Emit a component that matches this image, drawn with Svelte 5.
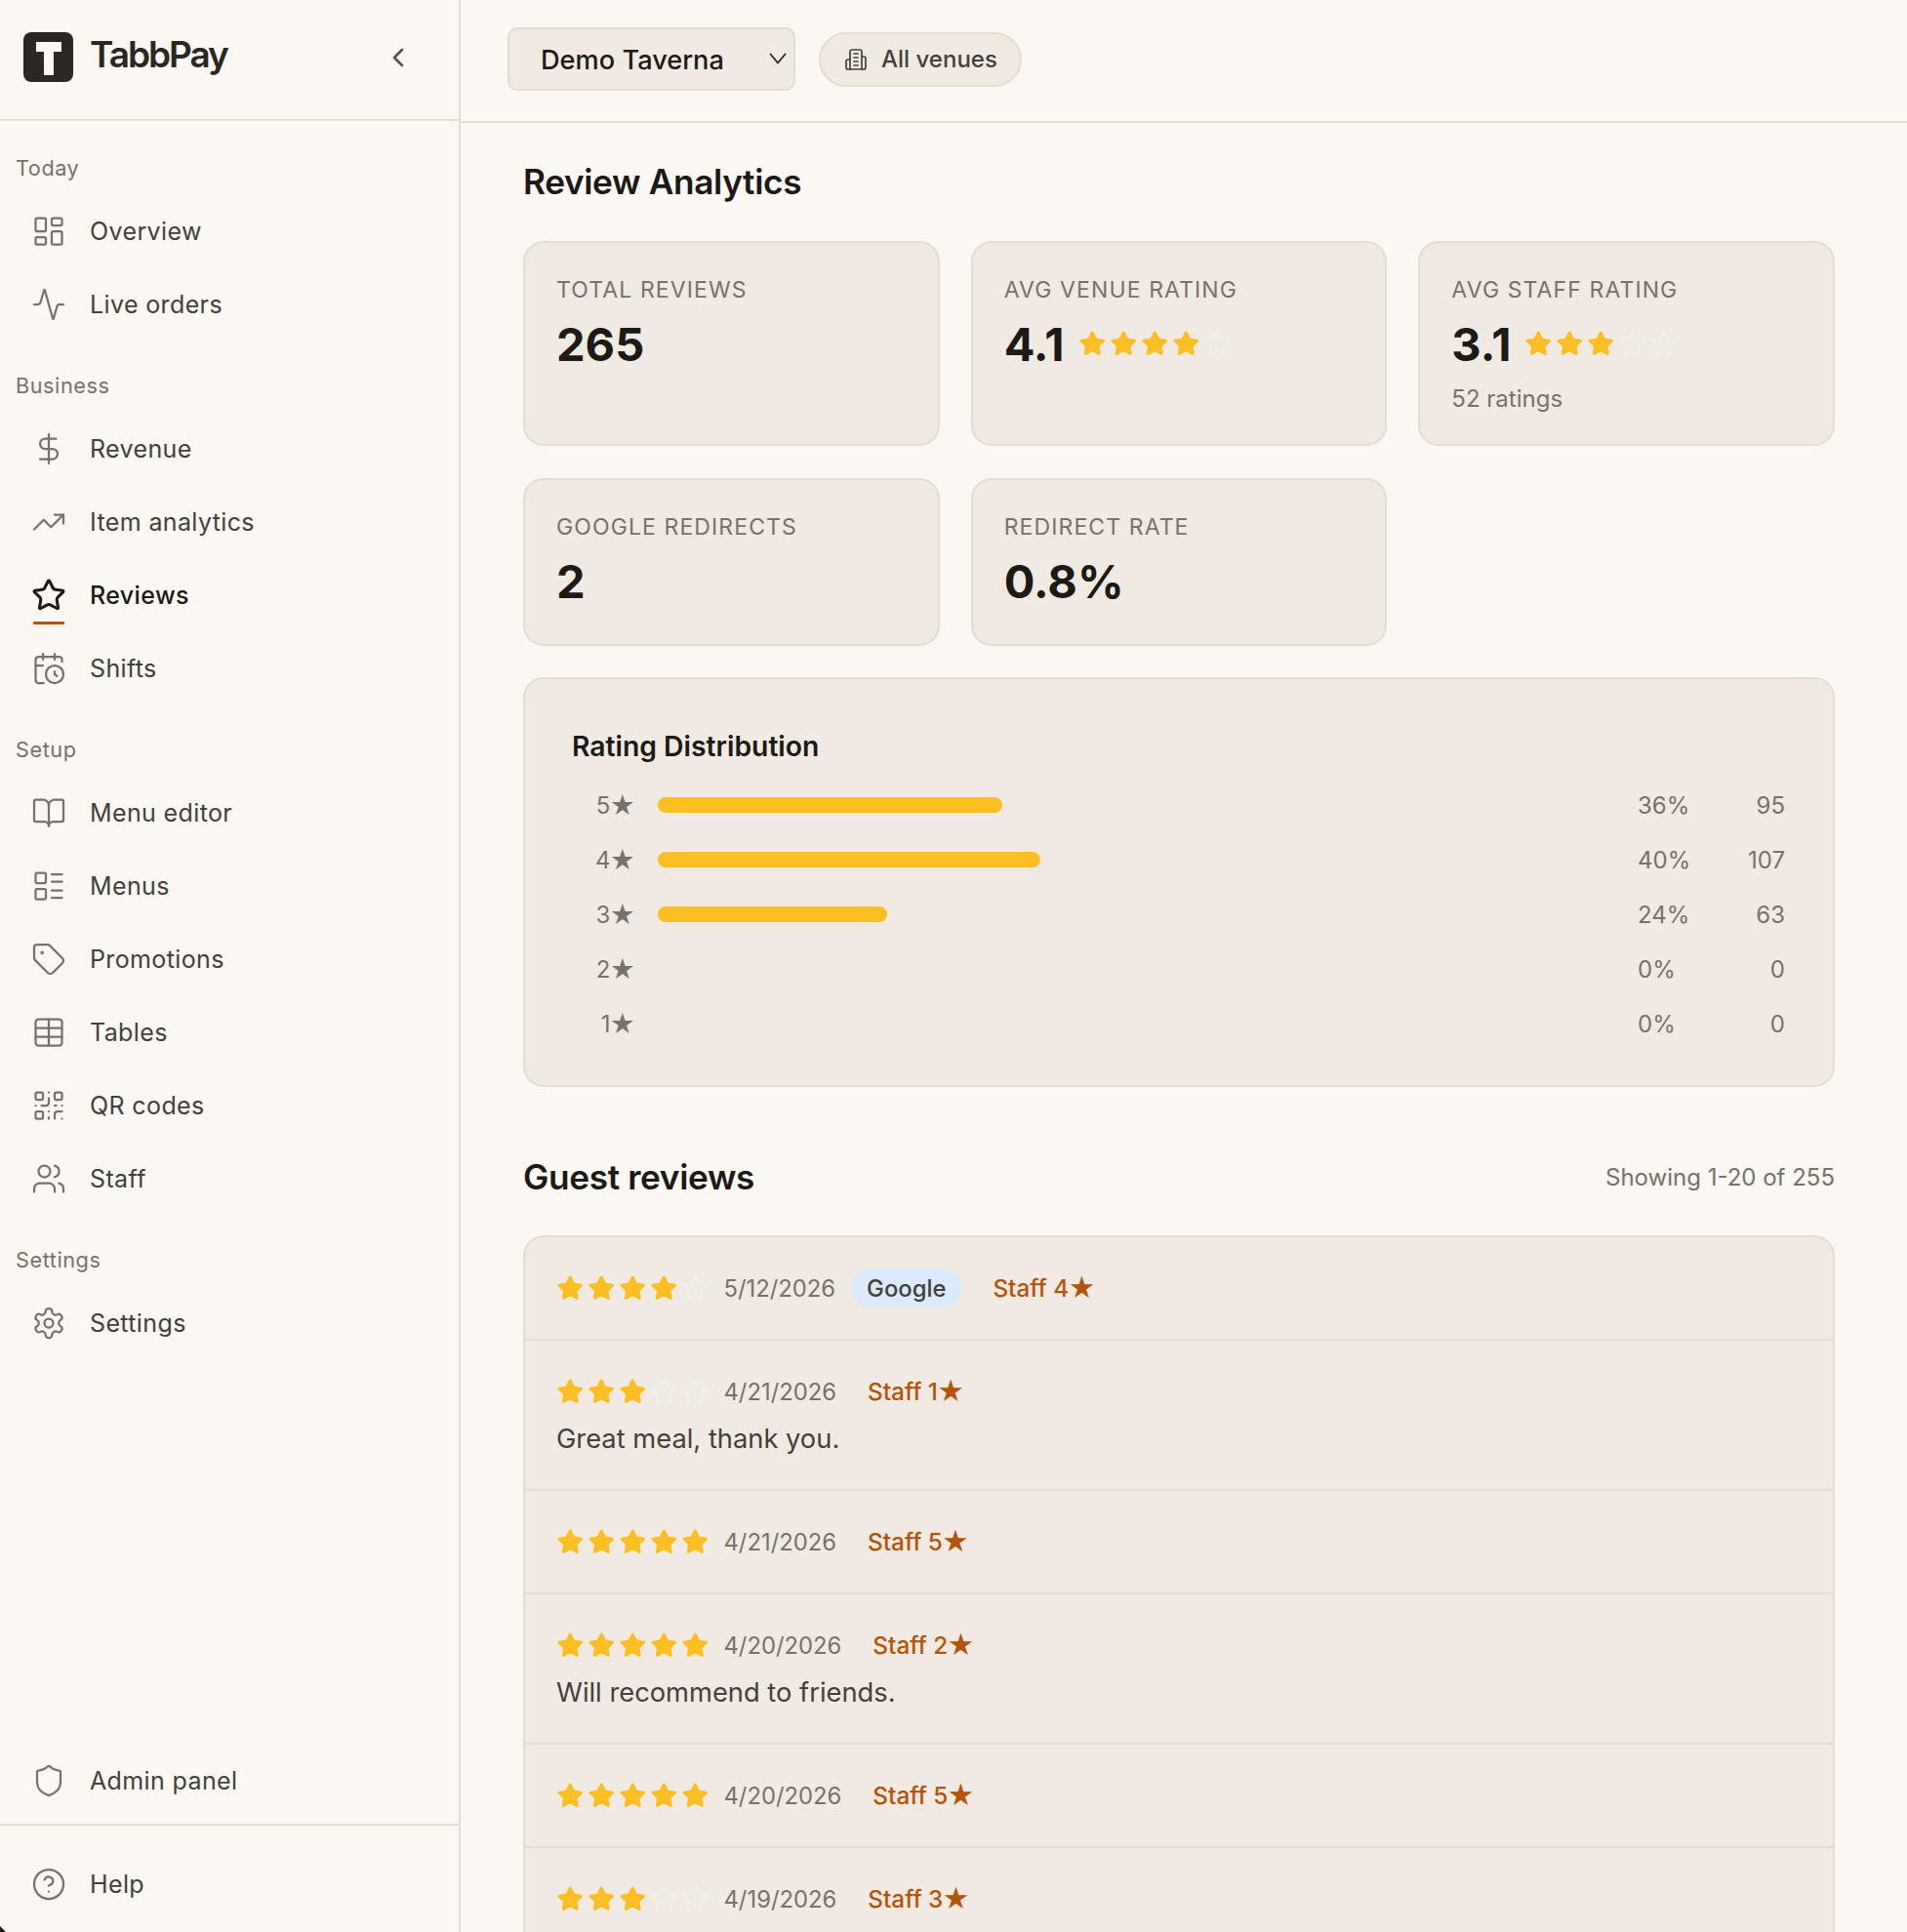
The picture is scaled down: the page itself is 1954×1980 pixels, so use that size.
<script>
	const navGroups = [
		{ label: 'Today', items: [{ name: 'Overview', icon: 'dashboard' }, { name: 'Live orders', icon: 'activity' }] },
		{
			label: 'Business',
			items: [
				{ name: 'Revenue', icon: 'dollar' },
				{ name: 'Item analytics', icon: 'trending' },
				{ name: 'Reviews', icon: 'star', active: true },
				{ name: 'Shifts', icon: 'calendar' }
			]
		},
		{
			label: 'Setup',
			items: [
				{ name: 'Menu editor', icon: 'book' },
				{ name: 'Menus', icon: 'list' },
				{ name: 'Promotions', icon: 'tag' },
				{ name: 'Tables', icon: 'table' },
				{ name: 'QR codes', icon: 'qr' },
				{ name: 'Staff', icon: 'users' }
			]
		},
		{ label: 'Settings', items: [{ name: 'Settings', icon: 'gear' }] }
	];

	const distribution = [
		{ star: 5, pct: 36, count: 95 },
		{ star: 4, pct: 40, count: 107 },
		{ star: 3, pct: 24, count: 63 },
		{ star: 2, pct: 0, count: 0 },
		{ star: 1, pct: 0, count: 0 }
	];

	const reviews = [
		{ rating: 4, date: '5/12/2026', google: true, staff: 4 },
		{ rating: 3, date: '4/21/2026', staff: 1, comment: 'Great meal, thank you.' },
		{ rating: 5, date: '4/21/2026', staff: 5 },
		{ rating: 5, date: '4/20/2026', staff: 2, comment: 'Will recommend to friends.' },
		{ rating: 5, date: '4/20/2026', staff: 5 },
		{ rating: 3, date: '4/19/2026', staff: 3 }
	];

	const starPath =
		'M11.525 2.295a.53.53 0 0 1 .95 0l2.31 4.679a2.123 2.123 0 0 0 1.595 1.16l5.166.756a.53.53 0 0 1 .294.904l-3.736 3.638a2.123 2.123 0 0 0-.611 1.878l.882 5.14a.53.53 0 0 1-.771.56l-4.618-2.428a2.122 2.122 0 0 0-1.973 0L6.396 21.01a.53.53 0 0 1-.77-.56l.881-5.139a2.122 2.122 0 0 0-.611-1.879L2.16 9.795a.53.53 0 0 1 .294-.906l5.165-.755a2.122 2.122 0 0 0 1.597-1.16z';
</script>

{#snippet icon(name)}
	<svg class="icon" viewBox="0 0 24 24" aria-hidden="true">
		{#if name === 'dashboard'}
			<rect x="3" y="3" width="7" height="9" rx="1" /><rect x="14" y="3" width="7" height="5" rx="1" /><rect x="14" y="12" width="7" height="9" rx="1" /><rect x="3" y="16" width="7" height="5" rx="1" />
		{:else if name === 'activity'}
			<path d="M22 12h-2.48a2 2 0 0 0-1.93 1.46l-2.35 8.36a.25.25 0 0 1-.48 0L9.24 2.18a.25.25 0 0 0-.48 0l-2.35 8.36A2 2 0 0 1 4.49 12H2" />
		{:else if name === 'dollar'}
			<path d="M12 2v20" /><path d="M17 5H9.5a3.5 3.5 0 0 0 0 7h5a3.5 3.5 0 0 1 0 7H6" />
		{:else if name === 'trending'}
			<path d="M22 7 13.5 15.5 8.5 10.5 2 17" /><path d="M16 7h6v6" />
		{:else if name === 'star'}
			<path d={starPath} />
		{:else if name === 'calendar'}
			<path d="M16 14v2.2l1.6 1" /><path d="M16 2v4" /><path d="M21 7.5V6a2 2 0 0 0-2-2H5a2 2 0 0 0-2 2v14a2 2 0 0 0 2 2h3.5" /><path d="M3 10h5" /><path d="M8 2v4" /><circle cx="16" cy="16" r="6" />
		{:else if name === 'book'}
			<path d="M12 7v14" /><path d="M3 18a1 1 0 0 1-1-1V4a1 1 0 0 1 1-1h5a4 4 0 0 1 4 4 4 4 0 0 1 4-4h5a1 1 0 0 1 1 1v13a1 1 0 0 1-1 1h-6a3 3 0 0 0-3 3 3 3 0 0 0-3-3z" />
		{:else if name === 'list'}
			<rect x="3" y="3" width="7" height="7" rx="1" /><rect x="3" y="14" width="7" height="7" rx="1" /><path d="M14 4h7" /><path d="M14 9h7" /><path d="M14 15h7" /><path d="M14 20h7" />
		{:else if name === 'tag'}
			<path d="M12.586 2.586A2 2 0 0 0 11.172 2H4a2 2 0 0 0-2 2v7.172a2 2 0 0 0 .586 1.414l8.704 8.704a2.426 2.426 0 0 0 3.42 0l6.58-6.58a2.426 2.426 0 0 0 0-3.42z" /><circle cx="7.5" cy="7.5" r=".5" />
		{:else if name === 'table'}
			<path d="M12 3v18" /><rect x="3" y="3" width="18" height="18" rx="2" /><path d="M3 9h18" /><path d="M3 15h18" />
		{:else if name === 'qr'}
			<rect x="3" y="3" width="5" height="5" rx="1" /><rect x="16" y="3" width="5" height="5" rx="1" /><rect x="3" y="16" width="5" height="5" rx="1" /><path d="M21 16h-3a2 2 0 0 0-2 2v3" /><path d="M21 21v.01" /><path d="M12 7v3a2 2 0 0 1-2 2H7" /><path d="M3 12h.01" /><path d="M12 3h.01" /><path d="M12 16v.01" /><path d="M16 12h1" /><path d="M21 12v.01" /><path d="M12 21v-1" />
		{:else if name === 'users'}
			<path d="M16 21v-2a4 4 0 0 0-4-4H6a4 4 0 0 0-4 4v2" /><path d="M16 3.128a4 4 0 0 1 0 7.744" /><path d="M22 21v-2a4 4 0 0 0-3-3.87" /><circle cx="9" cy="7" r="4" />
		{:else if name === 'gear'}
			<path d="M12.22 2h-.44a2 2 0 0 0-2 2v.18a2 2 0 0 1-1 1.73l-.43.25a2 2 0 0 1-2 0l-.15-.08a2 2 0 0 0-2.73.73l-.22.38a2 2 0 0 0 .73 2.73l.15.1a2 2 0 0 1 1 1.72v.51a2 2 0 0 1-1 1.74l-.15.09a2 2 0 0 0-.73 2.73l.22.38a2 2 0 0 0 2.73.73l.15-.08a2 2 0 0 1 2 0l.43.25a2 2 0 0 1 1 1.73V20a2 2 0 0 0 2 2h.44a2 2 0 0 0 2-2v-.18a2 2 0 0 1 1-1.73l.43-.25a2 2 0 0 1 2 0l.15.08a2 2 0 0 0 2.73-.73l.22-.39a2 2 0 0 0-.73-2.73l-.15-.08a2 2 0 0 1-1-1.74v-.5a2 2 0 0 1 1-1.74l.15-.09a2 2 0 0 0 .73-2.73l-.22-.38a2 2 0 0 0-2.73-.73l-.15.08a2 2 0 0 1-2 0l-.43-.25a2 2 0 0 1-1-1.73V4a2 2 0 0 0-2-2z" /><circle cx="12" cy="12" r="3" />
		{:else if name === 'shield'}
			<path d="M20 13c0 5-3.5 7.5-7.66 8.95a1 1 0 0 1-.67-.01C7.5 20.5 4 18 4 13V6a1 1 0 0 1 1-1c2 0 4.5-1.2 6.24-2.72a1.17 1.17 0 0 1 1.52 0C14.51 3.81 17 5 19 5a1 1 0 0 1 1 1z" />
		{:else if name === 'help'}
			<circle cx="12" cy="12" r="10" /><path d="M9.09 9a3 3 0 0 1 5.83 1c0 2-3 3-3 3" /><path d="M12 17h.01" />
		{/if}
	</svg>
{/snippet}

{#snippet stars(rating)}
	<span class="stars">
		{#each [1, 2, 3, 4, 5] as n}
			<svg class="star" class:filled={n <= rating} viewBox="0 0 24 24" aria-hidden="true"><path d={starPath} /></svg>
		{/each}
	</span>
{/snippet}

{#snippet navItem(item)}
	<a class="nav-item" class:active={item.active} href="#top">
		<span class="nav-icon">{@render icon(item.icon)}</span>
		<span>{item.name}</span>
	</a>
{/snippet}

<div class="app">
	<aside class="sidebar">
		<div class="brand">
			<svg class="logo" viewBox="0 0 51 51" aria-hidden="true">
				<rect width="51" height="51" rx="8" fill="#2a2724" />
				<path d="M13 10h26v10h-8v24H21V20h-8z" fill="#fbf7f3" />
			</svg>
			<span class="brand-name">TabbPay</span>
			<svg class="collapse" viewBox="0 0 24 24" aria-hidden="true"><path d="m15 18-6-6 6-6" /></svg>
		</div>

		<nav class="nav">
			{#each navGroups as group}
				<div class="nav-group">
					<div class="nav-label">{group.label}</div>
					{#each group.items as item}
						{@render navItem(item)}
					{/each}
				</div>
			{/each}
		</nav>

		<div class="side-bottom">
			<div class="admin">{@render navItem({ name: 'Admin panel', icon: 'shield' })}</div>
			<div class="help">{@render navItem({ name: 'Help', icon: 'help' })}</div>
		</div>
	</aside>

	<main class="main">
		<header class="topbar">
			<div class="venue-select">
				<span>Demo Taverna</span>
				<svg viewBox="0 0 18 12" aria-hidden="true"><path d="M1.5 1.5 9 10.5 16.5 1.5" /></svg>
			</div>
			<div class="venues-pill">
				<svg viewBox="0 0 24 24" aria-hidden="true">
					<path d="M6 22V4a2 2 0 0 1 2-2h8a2 2 0 0 1 2 2v18Z" /><path d="M6 12H4a2 2 0 0 0-2 2v6a2 2 0 0 0 2 2h2" /><path d="M18 9h2a2 2 0 0 1 2 2v9a2 2 0 0 1-2 2h-2" /><path d="M10 6h4" /><path d="M10 10h4" /><path d="M10 14h4" /><path d="M10 18h4" />
				</svg>
				<span>All venues</span>
			</div>
		</header>

		<div class="content">
			<h1>Review Analytics</h1>

			<section class="stats">
				<div class="card stat">
					<div class="stat-label">Total reviews</div>
					<div class="stat-value">265</div>
				</div>
				<div class="card stat">
					<div class="stat-label">Avg venue rating</div>
					<div class="stat-value">4.1 {@render stars(4)}</div>
				</div>
				<div class="card stat">
					<div class="stat-label">Avg staff rating</div>
					<div class="stat-value">3.1 {@render stars(3)}</div>
					<div class="stat-sub">52 ratings</div>
				</div>
				<div class="card stat">
					<div class="stat-label">Google redirects</div>
					<div class="stat-value">2</div>
				</div>
				<div class="card stat">
					<div class="stat-label">Redirect rate</div>
					<div class="stat-value">0.8%</div>
				</div>
			</section>

			<section class="card dist">
				<h3>Rating Distribution</h3>
				{#each distribution as row}
					<div class="dist-row">
						<span class="dist-star">{row.star}<span class="glyph">★</span></span>
						<span class="track"><span class="bar" style="width: {row.pct}%"></span></span>
						<span class="dist-pct">{row.pct}%</span>
						<span class="dist-count">{row.count}</span>
					</div>
				{/each}
			</section>

			<div class="reviews-head">
				<h2>Guest reviews</h2>
				<span class="showing">Showing 1-20 of 255</span>
			</div>

			<section class="card reviews">
				{#each reviews as review}
					<article class="review">
						<div class="review-meta">
							{@render stars(review.rating)}
							<span class="date">{review.date}</span>
							{#if review.google}
								<span class="badge">Google</span>
							{/if}
							<span class="staff">Staff {review.staff}<span class="glyph">★</span></span>
						</div>
						{#if review.comment}
							<p class="comment">{review.comment}</p>
						{/if}
					</article>
				{/each}
			</section>
		</div>
	</main>

	<span class="corner"></span>
</div>

<style>
	:global(body) {
		margin: 0;
		background: #fbf7f3;
	}

	.app {
		position: relative;
		display: flex;
		height: 100vh;
		overflow: hidden;
		background: #fbf7f3;
		color: #1c1917;
		font-family: Inter, 'Noto Sans', sans-serif;
	}

	/* Sidebar */
	.sidebar {
		box-sizing: border-box;
		flex: 0 0 472px;
		display: flex;
		flex-direction: column;
		border-right: 2px solid #e3ddd2;
	}

	.brand {
		box-sizing: border-box;
		height: 124px;
		display: flex;
		align-items: center;
		padding: 0 0 5px 24px;
		border-bottom: 2px solid #e3ddd2;
	}

	.logo {
		width: 51px;
		height: 51px;
		flex: none;
	}

	.brand-name {
		margin-left: 17px;
		margin-top: -7px;
		font-size: 37px;
		font-weight: 600;
		letter-spacing: -0.055em;
		color: #2a2724;
	}

	.collapse {
		width: 32px;
		height: 32px;
		margin-left: auto;
		margin-right: 46px;
		fill: none;
		stroke: #57534e;
		stroke-width: 2;
		stroke-linecap: round;
		stroke-linejoin: round;
	}

	.nav {
		padding-top: 33px;
	}

	.nav-group {
		margin-bottom: 31px;
	}

	.nav-label {
		height: 30px;
		line-height: 30px;
		margin-bottom: 12px;
		padding-left: 16px;
		font-size: 21.7px;
		letter-spacing: 0.025em;
		color: #78716c;
	}

	.nav-item {
		position: relative;
		box-sizing: border-box;
		height: 75px;
		display: flex;
		align-items: center;
		padding-left: 32px;
		font-size: 25px;
		letter-spacing: 0.015em;
		text-decoration: none;
		color: #44403c;
	}

	.nav-item.active {
		color: #1c1917;
		font-weight: 500;
	}

	.nav-icon {
		position: relative;
		display: flex;
		width: 36px;
		height: 36px;
		margin-right: 24px;
		color: #78716c;
	}

	.active .nav-icon {
		color: #1c1917;
	}

	.active .nav-icon::after {
		content: '';
		position: absolute;
		left: 2px;
		right: 2px;
		bottom: -12px;
		height: 3px;
		border-radius: 1px;
		background: #b45309;
	}

	.icon {
		width: 36px;
		height: 36px;
		fill: none;
		stroke: currentColor;
		stroke-width: 1.5;
		stroke-linecap: round;
		stroke-linejoin: round;
	}

	.active .icon {
		stroke-width: 2;
	}

	.side-bottom {
		margin-top: auto;
	}

	.admin {
		padding-bottom: 7px;
	}

	.help {
		padding: 22px 0 12px;
		border-top: 2px solid #e3ddd2;
	}

	/* Top bar */
	.main {
		flex: 1;
		min-width: 0;
	}

	.topbar {
		box-sizing: border-box;
		height: 126px;
		display: flex;
		align-items: center;
		gap: 24px;
		padding: 0 0 3px 48px;
		border-bottom: 2px solid #e3ddd2;
	}

	.venue-select {
		box-sizing: border-box;
		width: 295px;
		height: 65px;
		display: flex;
		align-items: center;
		justify-content: space-between;
		padding: 2px 7px 0 32px;
		border: 2px solid #e3ddd2;
		border-radius: 10px;
		background: #f0eae3;
		font-size: 27.2px;
		font-weight: 500;
	}

	.venue-select svg {
		width: 18px;
		height: 12px;
		margin-top: -3px;
		fill: none;
		stroke: #292524;
		stroke-width: 1.8;
		stroke-linecap: round;
		stroke-linejoin: round;
	}

	.venues-pill {
		box-sizing: border-box;
		height: 56px;
		display: flex;
		align-items: center;
		gap: 14px;
		padding: 0 23px 0 24px;
		border: 2px solid #e3ddd2;
		border-radius: 28px;
		background: #f0eae3;
		font-size: 24px;
		font-weight: 500;
		color: #44403c;
	}

	.venues-pill svg {
		width: 24px;
		height: 24px;
		fill: none;
		stroke: #44403c;
		stroke-width: 1.7;
		stroke-linecap: round;
		stroke-linejoin: round;
	}

	/* Content */
	.content {
		padding: 37px 74px 0 64px;
	}

	h1 {
		margin: 0 0 36px;
		font-size: 35.2px;
		line-height: 47px;
		padding-bottom: 1px;
		font-weight: 600;
		letter-spacing: -0.01em;
	}

	.card {
		box-sizing: border-box;
		border: 2px solid #e3ddd2;
		border-radius: 21px;
		background: #f0eae3;
	}

	.stats {
		display: grid;
		grid-template-columns: repeat(3, 1fr);
		gap: 33px 32px;
	}

	.stat {
		padding: 34px 32px 36px;
	}

	.stat-label {
		font-size: 23px;
		line-height: 28px;
		letter-spacing: 0.048em;
		text-transform: uppercase;
		color: #78716c;
	}

	.stat-value {
		display: flex;
		align-items: center;
		gap: 14px;
		margin-top: 12px;
		height: 58px;
		font-size: 47px;
		font-weight: 700;
	}

	.stat-sub {
		margin-top: 18px;
		font-size: 24px;
		line-height: 20px;
		color: #78716c;
	}

	.stars {
		display: inline-flex;
		gap: 3.5px;
	}

	.review .stars {
		margin-right: -1px;
	}

	.star {
		width: 28.5px;
		height: 28.5px;
		flex: none;
		fill: none;
		stroke: #f0f2f5;
		stroke-width: 1;
		stroke-linejoin: round;
	}

	.star.filled {
		fill: #fbbf24;
		stroke: #fbbf24;
		stroke-width: 1.5;
	}

	.glyph {
		margin-left: -1px;
		font-size: 1.12em;
		line-height: 1;
		vertical-align: -1px;
	}

	/* Rating distribution */
	.dist {
		margin-top: 32px;
		padding: 53px 49px 35px 48px;
	}

	h3 {
		margin: 0 0 16px;
		font-size: 28.3px;
		line-height: 32px;
		font-weight: 600;
	}

	.dist-row {
		height: 56px;
		display: grid;
		grid-template-columns: 64px 1fr 64px 63px;
		align-items: center;
		gap: 24px;
		font-size: 24px;
		color: #78716c;
	}

	.dist-star {
		text-align: right;
		margin-right: -1px;
	}

	.dist-star .glyph {
		font-size: 1.06em;
	}

	.track {
		height: 16px;
	}

	.bar {
		display: block;
		height: 100%;
		border-radius: 8px;
		background: #fbbf24;
	}

	.dist-count {
		text-align: right;
	}

	/* Guest reviews */
	.reviews-head {
		display: flex;
		align-items: center;
		justify-content: space-between;
		margin: 70px 0 38px;
	}

	h2 {
		margin: 0;
		font-size: 35.2px;
		line-height: 44px;
		font-weight: 600;
		letter-spacing: -0.01em;
	}

	.showing {
		font-size: 24px;
		color: #78716c;
	}

	.review {
		padding: 32px;
		border-bottom: 2px solid #e3ddd2;
	}

	.review-meta {
		height: 40px;
		display: flex;
		align-items: center;
		gap: 16px;
	}

	.date {
		font-size: 23.8px;
		color: #78716c;
	}

	.badge {
		box-sizing: border-box;
		height: 40px;
		display: flex;
		align-items: center;
		padding: 0 16px;
		border-radius: 20px;
		background: #dbeafe;
		font-size: 23.8px;
		font-weight: 500;
		color: #44403c;
	}

	.staff {
		margin-left: 16px;
		font-size: 24.3px;
		font-weight: 500;
		color: #b45309;
	}

	.comment {
		margin: 11px 0 1px;
		font-size: 27.3px;
		line-height: 36px;
		color: #44403c;
	}

	.corner {
		position: absolute;
		left: 0;
		bottom: 0;
		width: 0;
		height: 0;
		border-style: solid;
		border-width: 6px 0 0 6px;
		border-color: transparent transparent transparent #1c1917;
	}
</style>
